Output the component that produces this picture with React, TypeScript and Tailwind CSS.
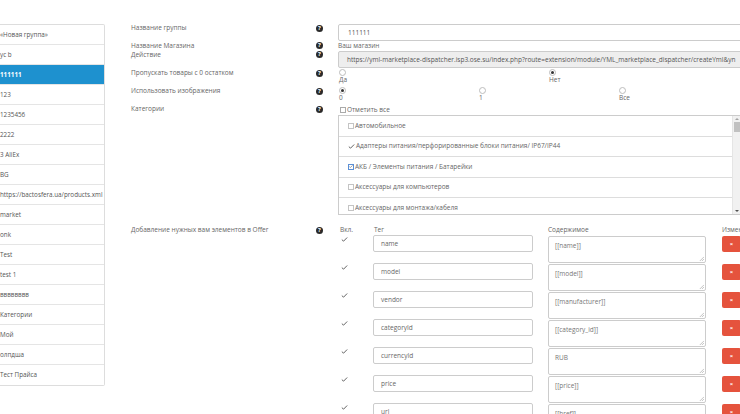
import React from 'react'

const groups = [
  '«Новая группа»', 'ус b', '111111', '123', '1235456', '2222', '3 AliEx', 'BG',
  'https://bactosfera.ua/products.xml', 'market', 'onk', 'Test', 'test 1',
  'вввввввв', 'Категории', 'Мой', 'олпдша', 'Тест Прайса',
]

const categories = [
  { name: 'Автомобильное', state: 'off' },
  { name: 'Адаптеры питания/перфорированные блоки питания/ IP67/IP44', state: 'tick' },
  { name: 'АКБ / Элементы питания / Батарейки', state: 'on' },
  { name: 'Аксессуары для компьютеров', state: 'off' },
  { name: 'Аксессуары для монтажа/кабеля', state: 'off' },
]

const offers = [
  ['name', '[[name]]'],
  ['model', '[[model]]'],
  ['vendor', '[[manufacturer]]'],
  ['categoryId', '[[category_id]]'],
  ['currencyId', 'RUB'],
  ['price', '[[price]]'],
  ['url', '[[href]]'],
]

function Help() {
  return (
    <span className="w-[7px] h-[7px] rounded-full bg-[#2a2a2a] text-white text-[6px] font-bold leading-[7px] flex items-center justify-center shrink-0">
      ?
    </span>
  )
}

function Tick({ className = '' }: { className?: string }) {
  return (
    <svg viewBox="0 0 8 6" className={`w-[7px] h-[5px] ${className}`}>
      <path d="M0.8 3.2 L2.9 5 L7.2 0.6" fill="none" stroke="#555" strokeWidth="1.1" />
    </svg>
  )
}

function Radio({ checked }: { checked?: boolean }) {
  return (
    <span className="w-[7px] h-[7px] rounded-full border border-[#bdbdbd] bg-white flex items-center justify-center">
      {checked && <span className="w-[3px] h-[3px] rounded-full bg-[#333]" />}
    </span>
  )
}

function Label({ children, icon = true }: { children: React.ReactNode; icon?: boolean }) {
  return (
    <div className="w-[207px] flex items-center justify-between pr-[15px] h-[10px] leading-[10px] text-[#666]">
      <span>{children}</span>
      {icon && <Help />}
    </div>
  )
}

export default function App() {
  return (
    <div className="w-[740px] h-[414px] overflow-hidden bg-white text-[6.5px] font-['Open_Sans',sans-serif] text-[#666]">
      <div className="flex pt-[23px]">
        {/* group list */}
        <div className="w-[105px] shrink-0 mt-[1px]">
          <div className="border border-[#ddd] border-l-0 rounded-r-[2px] overflow-hidden text-[6.3px]">
            {groups.map((g, i) => (
              <div
                key={g}
                className={`h-[20px] flex items-center whitespace-nowrap ${i < groups.length - 1 ? 'border-b border-[#e5e5e5]' : ''} ${g === '111111' ? 'bg-[#1e91cf] text-white font-bold border-[#1e91cf]' : 'text-[#555]'}`}>
                {g}
              </div>
            ))}
          </div>
        </div>

        {/* form */}
        <div className="ml-[26px] flex flex-col">
          {/* Название группы */}
          <div className="flex h-[18px]">
            <Label>Название группы</Label>
            <div className="w-[420px] shrink-0">
              <div className="mt-[1px] h-[17px] border border-[#ccc] rounded-[2px] flex items-center px-[9px] text-[#555]">111111</div>
            </div>
          </div>

          {/* Магазин / Действие */}
          <div className="flex h-[27px]">
            <div className="flex flex-col">
              <div className="w-[207px] flex items-center justify-between pr-[15px] h-[9px] leading-[9px]">
                <span>Название Магазина</span>
                <Help />
              </div>
              <div className="w-[207px] flex items-center justify-between pr-[15px] h-[9px] leading-[9px]">
                <span>Действие</span>
                <Help />
              </div>
            </div>
            <div className="w-[420px] shrink-0">
              <div className="h-[10px] leading-[10px]">Ваш магазин</div>
              <div className="h-[17px] border border-[#ccc] rounded-[2px] bg-[#eee] flex items-center px-[8px] whitespace-nowrap overflow-hidden text-[#555]">
                https://yml-marketplace-dispatcher.isp3.ose.su/index.php?route=extension/module/YML_marketplace_dispatcher/createYml&amp;yn
              </div>
            </div>
          </div>

          {/* Пропускать */}
          <div className="flex h-[18px]">
            <Label>Пропускать товары с 0 остатком</Label>
            <div className="w-[420px] shrink-0 grid grid-cols-2">
              {[['Да', false], ['Нет', true]].map(([t, c]) => (
                <div key={t as string} className="flex flex-col items-start pt-[1px] pl-[1px]">
                  <Radio checked={c as boolean} />
                  <span className="leading-[10px] mt-[-1px]">{t}</span>
                </div>
              ))}
            </div>
          </div>

          {/* Изображения */}
          <div className="flex h-[18px]">
            <Label>Использовать изображения</Label>
            <div className="w-[420px] shrink-0 grid grid-cols-3">
              {[['0', true], ['1', false], ['Все', false]].map(([t, c]) => (
                <div key={t as string} className="flex flex-col items-start pt-[1px] pl-[1px]">
                  <Radio checked={c as boolean} />
                  <span className="leading-[10px] mt-[-1px]">{t}</span>
                </div>
              ))}
            </div>
          </div>

          {/* Категории */}
          <div className="flex">
            <Label>Категории</Label>
            <div className="w-[420px] shrink-0">
              <div className="h-[11px] flex items-center gap-[1px] pl-[2px]">
                <span className="w-[6px] h-[6px] border border-[#aaa] bg-white" />
                <span>Отметить все</span>
              </div>
              <div className="w-[403px] h-[100px] border border-[#ccc] flex overflow-hidden">
                <div className="flex-1">
                  {categories.map(c => (
                    <div key={c.name} className="h-[20.5px] border-b border-[#ddd] flex items-center pl-[9px] gap-[1px] whitespace-nowrap">
                      {c.state === 'off' && <span className="w-[6px] h-[6px] border border-[#c4c4c4] bg-white" />}
                      {c.state === 'tick' && <Tick />}
                      {c.state === 'on' && (
                        <span className="w-[6px] h-[6px] border border-[#5b8fd6] bg-white flex items-center justify-center">
                          <Tick className="w-[5px] h-[4px]" />
                        </span>
                      )}
                      <span>{c.name}</span>
                    </div>
                  ))}
                </div>
                <div className="w-[8px] bg-[#f1f1f1] border-l border-[#e5e5e5] flex flex-col items-center justify-between py-[2px]">
                  <div className="flex flex-col items-center w-full">
                    <span className="w-0 h-0 border-l-[2px] border-r-[2px] border-b-[2px] border-l-transparent border-r-transparent border-b-[#a3a3a3]" />
                    <span className="mt-[2px] w-[6px] h-[10px] bg-[#c1c1c1]" />
                  </div>
                  <span className="w-0 h-0 border-l-[2px] border-r-[2px] border-t-[2px] border-l-transparent border-r-transparent border-t-[#505050]" />
                </div>
              </div>
            </div>
          </div>

          {/* Offer */}
          <div className="flex mt-[10px]">
            <Label>Добавление нужных вам элементов в Offer</Label>
            <div className="w-[420px] shrink-0">
              <div className="flex h-[10px] leading-[10px]">
                <span className="w-[36px] pl-[2px]">Вкл.</span>
                <span className="w-[174px]">Тег</span>
                <span className="w-[174px]">Содержимое</span>
                <span className="whitespace-nowrap">Изменить</span>
              </div>
              {offers.map(([tag, val]) => (
                <div key={tag} className="flex h-[28px]">
                  <div className="w-[35px] pt-[2px] pl-[3px]">
                    <Tick />
                  </div>
                  <div className="w-[175px]">
                    <div className="w-[160px] h-[17px] border border-[#ccc] rounded-[2px] flex items-center px-[7px] text-[#666]">{tag}</div>
                  </div>
                  <div className="w-[174px] pt-[1px]">
                    <div className="relative w-[158px] h-[27px] border border-[#ccc] rounded-[2px] px-[6px] pt-[4px] text-[#777]">
                      {val}
                      <svg viewBox="0 0 6 6" className="absolute right-[1px] bottom-[1px] w-[5px] h-[5px]">
                        <path d="M6 1 L1 6 M6 3.5 L3.5 6" stroke="#999" strokeWidth="0.7" />
                      </svg>
                    </div>
                  </div>
                  <div className="pt-[1px]">
                    <div className="w-[19px] h-[16px] bg-[#e5533d] rounded-[2px] flex items-center justify-center text-white text-[6px] font-bold">×</div>
                  </div>
                </div>
              ))}
            </div>
          </div>
        </div>
      </div>
    </div>
  )
}
